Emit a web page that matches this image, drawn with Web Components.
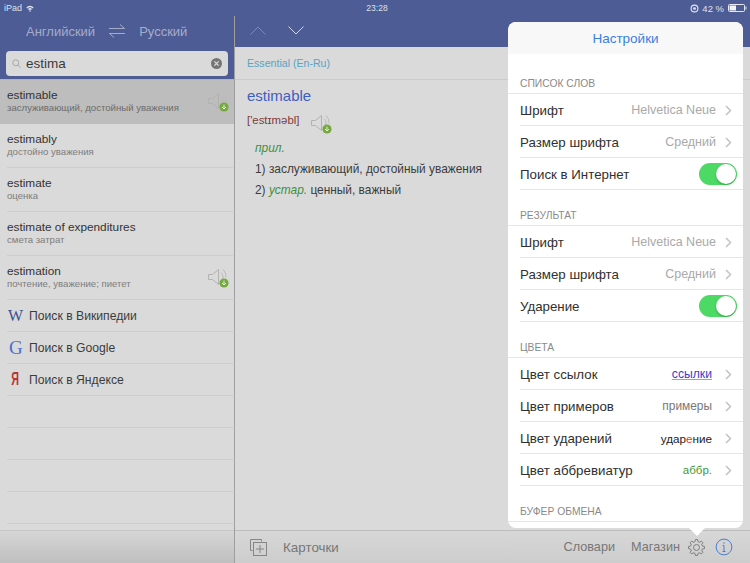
<!DOCTYPE html>
<html>
<head>
<meta charset="utf-8">
<title>Словарь</title>
<style>
  html, body { margin: 0; padding: 0; }
  body { width: 750px; height: 563px; overflow: hidden; font-family: "Liberation Sans", Arial, sans-serif; }
</style>
</head>
<body>
<dict-app></dict-app>

<script>
const speakerSvg = `
  <svg width="24" height="24" viewBox="0 0 24 24" fill="none">
    <path d="M1.500 8.500h4l6-5v15l-6-5h-4z" stroke="#b2b2b2" stroke-width="1" fill="none"/>
    <path d="M14 6.500a6 6 0 0 1 0 9M16 3.500a9.500 9.500 0 0 1 3 8" stroke="#bababa" stroke-width="1" fill="none"/>
    <circle cx="17" cy="17" r="4.600" fill="#76a940"/>
    <path d="M17 14.600v4.200M15 17l2 2 2-2" stroke="#e2eed6" stroke-width="1" fill="none"/>
  </svg>`;

const chevron = `<svg width="7" height="11" viewBox="0 0 7 11" fill="none"><path d="M1 1l4.500 4.500L1 10" stroke="#c3c3c3" stroke-width="1.500"/></svg>`;

function gearPath(cx, cy, outer, inner, teeth) {
  let d = '';
  const step = Math.PI * 2 / teeth;
  for (let i = 0; i < teeth; i++) {
    const a = i * step - Math.PI / 2;
    const pts = [
      [inner, a - step * 0.32], [outer, a - step * 0.17],
      [outer, a + step * 0.17], [inner, a + step * 0.32]
    ];
    pts.forEach(([r, t], j) => {
      d += (i === 0 && j === 0 ? 'M' : 'L') + (cx + r * Math.cos(t)).toFixed(2) + ' ' + (cy + r * Math.sin(t)).toFixed(2);
    });
  }
  return d + 'Z';
}

class StatusBar extends HTMLElement {
  constructor() {
    super();
    this.attachShadow({ mode: 'open' });
    this.shadowRoot.innerHTML = `
      <style>
        :host { display: grid; grid-template-columns: 1fr auto 1fr; align-items: center; height: 16px; background: #4d5c95; color: #dfe2ec; font-size: 9px; padding: 0 3px 0 4px; box-sizing: border-box; }
        .left { display: flex; align-items: center; gap: 4px; }
        .right { display: flex; align-items: center; justify-content: flex-end; gap: 4px; font-size: 9.500px; }
        .time { font-size: 8.500px; margin-left: 3px; }
      </style>
      <div class="left">iPad
        <svg width="8" height="7" viewBox="0 0 8 7"><path d="M0.400 2.400a5 5 0 0 1 7.200 0L6.700 3.400a3.700 3.700 0 0 0-5.400 0zM2 4a2.900 2.900 0 0 1 4 0L5.100 5a1.600 1.600 0 0 0-2.200 0zM4 6.900l-1-1.100a1.300 1.300 0 0 1 2 0z" fill="#e6e8f0"/></svg>
      </div>
      <div class="time">23:28</div>
      <div class="right">
        <svg width="9" height="9" viewBox="0 0 9 9" fill="none"><circle cx="4.500" cy="4.500" r="3.400" stroke="#e6e8f0" stroke-width="1.100"/><rect x="3.200" y="3.400" width="2.600" height="2.200" fill="#e6e8f0"/></svg>
        <span style="margin-left:-1px">42 %</span>
        <svg width="19" height="8" viewBox="0 0 19 8"><rect x="0.500" y="0.500" width="16" height="7" rx="1" fill="none" stroke="#e6e8f0"/><rect x="1.500" y="1.500" width="6.500" height="5" fill="#f2f3f7"/><rect x="17.500" y="2.500" width="1" height="3" fill="#e6e8f0"/></svg>
      </div>`;
  }
}

class SearchBox extends HTMLElement {
  constructor() {
    super();
    this.attachShadow({ mode: 'open' });
    this.shadowRoot.innerHTML = `
      <style>
        :host { display: flex; align-items: center; height: 25px; background: #dadada; border-radius: 4px; padding: 0 6px; box-sizing: border-box; font-size: 13.500px; color: #3a3a3a; }
        .val { flex: 1; margin-left: 5px; }
      </style>
      <svg width="9" height="10" viewBox="0 0 9 10" fill="none"><circle cx="3.800" cy="3.800" r="3" stroke="#a8a8a8"/><path d="M6 6l2.400 2.800" stroke="#a8a8a8"/></svg>
      <span class="val"><slot></slot></span>
      <svg width="11" height="11" viewBox="0 0 11 11"><circle cx="5.500" cy="5.500" r="5.500" fill="#757575"/><path d="M3.400 3.400l4.200 4.200M7.600 3.400l-4.200 4.200" stroke="#dcdcdc" stroke-width="1.300"/></svg>`;
  }
}

class WordRow extends HTMLElement {
  constructor() {
    super();
    this.attachShadow({ mode: 'open' });
  }
  connectedCallback() {
    const sel = this.hasAttribute('selected');
    const sound = this.hasAttribute('sound');
    this.shadowRoot.innerHTML = `
      <style>
        :host { display: flex; align-items: center; height: 44px; box-sizing: border-box; padding: 0 7px 1px; background: ${sel ? '#bdbdbd' : 'linear-gradient(#cdcdcd, #cdcdcd) no-repeat 7px 100% / 226px 1px'}; }
        .txt { flex: 1; min-width: 0; padding-bottom: 2px; }
        .w { font-size: 11.800px; color: #333; line-height: 14px; }
        .t { font-size: 9.600px; color: ${sel ? '#6c6c6c' : '#7d7d7d'}; line-height: 11px; white-space: nowrap; }
        .ico { width: 24px; height: 24px; margin-right: -4px; }
      </style>
      <div class="txt"><div class="w">${this.getAttribute('word')}</div><div class="t">${this.getAttribute('tr')}</div></div>
      ${sound ? `<div class="ico">${speakerSvg}</div>` : ''}`;
  }
}

class LinkRow extends HTMLElement {
  constructor() {
    super();
    this.attachShadow({ mode: 'open' });
    this.shadowRoot.innerHTML = `
      <style>
        :host { display: flex; align-items: center; height: 32px; box-sizing: border-box; padding: 0 0 1px 7px; background: linear-gradient(#cdcdcd, #cdcdcd) no-repeat 7px 100% / 226px 1px; font-size: 12.200px; color: #3c3c3c; }
        .logo { width: 22px; flex: none; display: flex; align-items: center; font-family: "Liberation Serif", serif; }
      </style>
      <div class="logo"><slot name="logo"></slot></div>
      <slot></slot>`;
  }
}

class WordList extends HTMLElement {
  constructor() {
    super();
    this.attachShadow({ mode: 'open' });
    this.shadowRoot.innerHTML = `
      <style>
        :host { display: flex; flex-direction: column; width: 234px; background: #dadada; border-right: 1px solid #9e9e9e; height: 547px; }
        .top { background: #4d5c95; height: 63px; box-sizing: border-box; display: flex; flex-direction: column; }
        .langs { display: flex; align-items: center; height: 30px; padding-left: 26px; font-size: 13px; color: #a5acca; }
        .langs svg { margin: 0 14px; }
        .search { padding: 5px 6px 0; }
        .rows { flex: 1; overflow: hidden; border-top: 1px solid #b3b3b3; }
        .blank { height: 32px; box-sizing: border-box; background: linear-gradient(#cdcdcd, #cdcdcd) no-repeat 7px 100% / 226px 1px; }
        .foot { height: 33px; background: linear-gradient(#d6d6d6, #bfbfbf); border-top: 1px solid #c6c6c6; box-sizing: border-box; }
      </style>
      <div class="top">
        <div class="langs">Английский
          <svg width="16" height="14" viewBox="0 0 16 14" fill="none" stroke="#a5acca"><path d="M0 4.500h15.500L11 .5M16 9.500H.5L5 13.500"/></svg>
          Русский
        </div>
        <div class="search"><search-box>estima</search-box></div>
      </div>
      <div class="rows"><slot></slot>
        <div class="blank"></div><div class="blank"></div><div class="blank"></div><div class="blank"></div>
      </div>
      <div class="foot"></div>`;
  }
}

class ArticlePane extends HTMLElement {
  constructor() {
    super();
    this.attachShadow({ mode: 'open' });
    this.shadowRoot.innerHTML = `
      <style>
        :host { display: flex; flex-direction: column; flex: 1; height: 547px; background: #dadada; }
        .nav { height: 31px; box-sizing: border-box; padding: 0 0 3px 15px; background: #4d5c95; display: flex; align-items: center; gap: 22px; }
        .dict { height: 33px; box-sizing: border-box; border-bottom: 1px solid #cbcbcb; display: flex; align-items: center; padding-left: 12px; font-size: 10.600px; color: #58a3c4; }
        .body { flex: 1; padding: 6px 12px; color: #3c3c3c; font-size: 11.900px; }
        .hw { font-size: 15px; color: #3e5fc0; line-height: 20px; }
        .ph { display: flex; align-items: center; font-size: 11.400px; color: #7d3a3a; height: 24px; margin-top: 2px; }
        .ph svg { margin-left: 11px; margin-top: 4px; align-self: flex-start; }
        .pos { color: #3d9040; font-style: italic; margin: 9px 0 0 8px; line-height: 14px; }
        .d { margin: 7px 0 0 8px; line-height: 14px; }
        .d i { color: #3d9040; }
        .foot { height: 33px; box-sizing: border-box; border-top: 1px solid #bcbcbc; background: linear-gradient(#d7d7d7, #cdcdcd); display: flex; align-items: center; padding: 0 17px 0 15px; font-size: 12.700px; color: #777; }
        .foot .cards { margin-left: 16px; flex: 1; font-size: 13.400px; }
        .foot .s { margin-right: 16px; }
        .foot .m { margin-right: 8px; }
        .foot svg { flex: none; }
        .foot .gear { margin-right: 10px; }
      </style>
      <div class="nav">
        <svg width="16" height="9" viewBox="0 0 16 9" fill="none" stroke="#7d89b4" stroke-width="1"><path d="M.5 8.500L8 1l7.500 7.500"/></svg>
        <svg width="16" height="9" viewBox="0 0 16 9" fill="none" stroke="#d3d7e5" stroke-width="1"><path d="M.5.5L8 8 15.500.5"/></svg>
      </div>
      <div class="dict">Essential (En-Ru)</div>
      <div class="body">
        <div class="hw">estimable</div>
        <div class="ph">['estɪməbl]${speakerSvg}</div>
        <div class="pos">прил.</div>
        <div class="d">1) заслуживающий, достойный уважения</div>
        <div class="d">2) <i>устар.</i> ценный, важный</div>
      </div>
      <div class="foot">
        <svg width="17" height="17" viewBox="0 0 17 17" fill="none" stroke="#868686"><path d="M11.500 2.500V.5H.5v11h2"/><rect x="3.500" y="3.500" width="13" height="13"/><path d="M10 6v8M6 10h8"/></svg>
        <span class="cards">Карточки</span>
        <span class="s">Словари</span>
        <span class="m">Магазин</span>
        <svg class="gear" width="17" height="17" viewBox="0 0 17 17" fill="none" stroke="#7c7c7c" stroke-linejoin="round"><path d="${gearPath(8.5, 8.5, 8, 6.1, 8)}"/><circle cx="8.500" cy="8.500" r="3"/></svg>
        <svg width="18" height="18" viewBox="0 0 18 18" fill="none" stroke="#4a7fd0"><circle cx="9" cy="9" r="7.900"/><path d="M9 7.500v5.500M7.500 13.500h3M7.800 7.500H9"/><circle cx="9" cy="5" r=".7" fill="#4a7fd0" stroke="none"/></svg>
      </div>`;
  }
}

class SettingsRow extends HTMLElement {
  constructor() {
    super();
    this.attachShadow({ mode: 'open' });
    this.shadowRoot.innerHTML = `
      <style>
        :host { display: flex; align-items: center; height: 32px; margin-left: 12px; padding: 1px 11px 0 0; border-bottom: 1px solid #e6e6e6; box-sizing: border-box; font-size: 13.300px; color: #303030; background: #fff; }
        .l { flex: 1; }
        .v { font-size: 12.500px; color: #a9a9a9; display: flex; align-items: center; }
        .chev { margin-left: 9px; display: ${this.hasAttribute('toggle') ? 'none' : 'flex'}; }
      </style>
      <span class="l"><slot name="label"></slot></span>
      <span class="v"><slot></slot></span>
      <span class="chev">${chevron}</span>`;
  }
}

class ColorSample extends HTMLElement {
  constructor() {
    super();
    this.attachShadow({ mode: 'open' });
    this.shadowRoot.innerHTML = `
      <style>
        :host { display: inline-block; margin-right: 4px; }
      </style>
      <slot></slot>`;
  }
}

class ToggleSwitch extends HTMLElement {
  constructor() {
    super();
    this.attachShadow({ mode: 'open' });
    this.shadowRoot.innerHTML = `
      <style>
        :host { display: block; width: 38px; height: 22px; border-radius: 11px; background: #4cd964; position: relative; margin-right: -5px; }
        .k { position: absolute; right: 1px; top: 1px; width: 20px; height: 20px; border-radius: 50%; background: #fff; box-shadow: 0 1px 2px rgba(0,0,0,.3); }
      </style>
      <div class="k"></div>`;
  }
}

class SettingsSection extends HTMLElement {
  constructor() {
    super();
    this.attachShadow({ mode: 'open' });
    this.shadowRoot.innerHTML = `
      <style>
        :host { display: block; }
        .h { height: 36px; box-sizing: border-box; padding: 0 0 3px 12px; display: flex; align-items: flex-end; font-size: 10.300px; color: #8a8a8a; border-bottom: 1px solid #e6e6e6; line-height: 12px; }
      </style>
      <div class="h">${this.getAttribute('title')}</div>
      <slot></slot>`;
  }
}

class SettingsPopover extends HTMLElement {
  constructor() {
    super();
    this.attachShadow({ mode: 'open' });
    this.shadowRoot.innerHTML = `
      <style>
        :host { position: absolute; left: 508px; top: 22px; width: 235px; height: 506px; display: flex; flex-direction: column; background: #fff; border-radius: 8px; }
        .title { height: 32px; flex: none; background: #f8f8f8; border-radius: 8px 8px 0 0; display: flex; align-items: center; justify-content: center; font-size: 13.500px; color: #3a7fe0; }
        .list { flex: 1; overflow: hidden; border-radius: 0 0 8px 8px; padding-top: 4px; }
        .arrow { position: absolute; left: 180px; bottom: -8px; width: 0; height: 0; border-left: 9px solid transparent; border-right: 9px solid transparent; border-top: 9px solid #fff; }
      </style>
      <div class="title">Настройки</div>
      <div class="list"><slot></slot></div>
      <div class="arrow"></div>`;
  }
}

class DictApp extends HTMLElement {
  constructor() {
    super();
    this.attachShadow({ mode: 'open' });
    this.shadowRoot.innerHTML = `
      <style>
        :host { display: block; position: relative; width: 750px; height: 563px; overflow: hidden; font-family: "Liberation Sans", Arial, sans-serif; }
        .main { display: flex; }
      </style>
      <status-bar></status-bar>
      <div class="main">
        <word-list>
          <word-row selected sound word="estimable" tr="заслуживающий, достойный уважения"></word-row>
          <word-row word="estimably" tr="достойно уважения"></word-row>
          <word-row word="estimate" tr="оценка"></word-row>
          <word-row word="estimate of expenditures" tr="смета затрат"></word-row>
          <word-row sound word="estimation" tr="почтение, уважение; пиетет"></word-row>
          <link-row><span slot="logo" style="font-size:16px;color:#3b4f8f;padding-left:1px">W</span>Поиск в Википедии</link-row>
          <link-row><span slot="logo" style="font-size:19px;color:#4a6fd0;padding-left:2px">G</span>Поиск в Google</link-row>
          <link-row><span slot="logo" style="font-size:18px;font-weight:bold;color:#b93434;padding-left:2px;font-family:'Liberation Sans',sans-serif;transform:scaleX(.6)">Я</span>Поиск в Яндексе</link-row>
        </word-list>
        <article-pane></article-pane>
      </div>
      <settings-popover>
        <settings-section title="СПИСОК СЛОВ">
          <settings-row><span slot="label">Шрифт</span>Helvetica Neue</settings-row>
          <settings-row><span slot="label">Размер шрифта</span>Средний</settings-row>
          <settings-row toggle><span slot="label">Поиск в Интернет</span><toggle-switch></toggle-switch></settings-row>
        </settings-section>
        <settings-section title="РЕЗУЛЬТАТ">
          <settings-row><span slot="label">Шрифт</span>Helvetica Neue</settings-row>
          <settings-row><span slot="label">Размер шрифта</span>Средний</settings-row>
          <settings-row toggle><span slot="label">Ударение</span><toggle-switch></toggle-switch></settings-row>
        </settings-section>
        <settings-section title="ЦВЕТА">
          <settings-row><span slot="label">Цвет ссылок</span><color-sample style="color:#3b3bc8;text-decoration:underline #9a9adf;font-size:12.200px">ссылки</color-sample></settings-row>
          <settings-row><span slot="label">Цвет примеров</span><color-sample style="color:#777;font-size:11.900px">примеры</color-sample></settings-row>
          <settings-row><span slot="label">Цвет ударений</span><color-sample style="color:#222;font-size:11.700px">удар<span style="color:#e33">е</span>ние</color-sample></settings-row>
          <settings-row><span slot="label">Цвет аббревиатур</span><color-sample style="color:#3d9a3d;font-size:11.500px">аббр.</color-sample></settings-row>
        </settings-section>
        <settings-section title="БУФЕР ОБМЕНА"></settings-section>
      </settings-popover>`;
  }
}

customElements.define('status-bar', StatusBar);
customElements.define('search-box', SearchBox);
customElements.define('word-row', WordRow);
customElements.define('link-row', LinkRow);
customElements.define('word-list', WordList);
customElements.define('article-pane', ArticlePane);
customElements.define('settings-row', SettingsRow);
customElements.define('color-sample', ColorSample);
customElements.define('toggle-switch', ToggleSwitch);
customElements.define('settings-section', SettingsSection);
customElements.define('settings-popover', SettingsPopover);
customElements.define('dict-app', DictApp);
</script>
</body>
</html>
